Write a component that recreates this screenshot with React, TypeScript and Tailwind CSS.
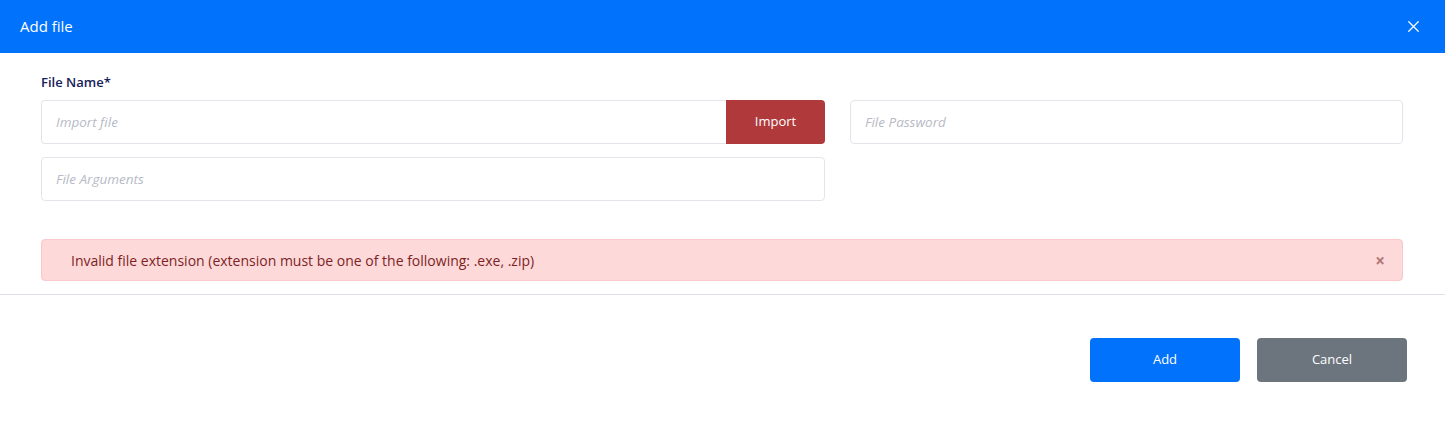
import { X } from 'lucide-react';

export default function App() {
  return (
    <div className="w-[1445px] h-[422px] bg-white font-['Open_Sans',sans-serif] flex flex-col">
      {/* Header */}
      <div className="h-[53px] bg-[#0072fb] flex items-center justify-between pl-5 pr-[22px]">
        <span className="text-white text-[15px]">Add file</span>
        <X className="w-[19px] h-[19px] text-white" strokeWidth={1.6} />
      </div>

      {/* Body */}
      <div className="pl-[41px] pr-[42px] pt-[20px]">
        <div className="text-[13px] font-semibold text-[#17205a] leading-[18px] mb-[9px]">File Name*</div>
        <div className="grid grid-cols-[784px_1fr] gap-x-[25px] gap-y-[13px]">
          <div className="flex h-[44px]">
            <input
              placeholder="Import file"
              className="flex-1 min-w-0 border border-[#e3e5ea] border-r-0 rounded-l-[4px] px-[14px] text-[13.5px] italic placeholder:text-[#b7bac6] outline-none"
            />
            <button className="w-[99px] bg-[#b0393b] text-white text-[13px] rounded-r-[4px]">Import</button>
          </div>
          <input
            placeholder="File Password"
            className="h-[44px] border border-[#e3e5ea] rounded-[4px] px-[14px] text-[13.5px] italic placeholder:text-[#b7bac6] outline-none"
          />
          <input
            placeholder="File Arguments"
            className="h-[44px] border border-[#e3e5ea] rounded-[4px] px-[14px] text-[13.5px] italic placeholder:text-[#b7bac6] outline-none"
          />
          <div />
        </div>

        <div className="mt-[38px] h-[42px] bg-[#fdd9da] border border-[#f9c8cb] rounded-[4px] flex items-center justify-between pl-[29px] pr-[17px]">
          <span className="text-[14px] font-medium text-[#7e1f24]">Invalid file extension (extension must be one of the following: .exe, .zip)</span>
          <span className="text-[#b2787b] text-[17px] font-bold leading-none">×</span>
        </div>
      </div>

      <div className="mt-[13px] border-t border-[#dee2e6]" />

      {/* Footer */}
      <div className="flex justify-end gap-[17px] pr-[38px] pt-[43px]">
        <button className="w-[150px] h-[44px] bg-[#0072fb] text-white text-[13px] rounded-[4px]">Add</button>
        <button className="w-[150px] h-[44px] bg-[#6c757d] text-white text-[13px] rounded-[4px]">Cancel</button>
      </div>
    </div>
  );
}
